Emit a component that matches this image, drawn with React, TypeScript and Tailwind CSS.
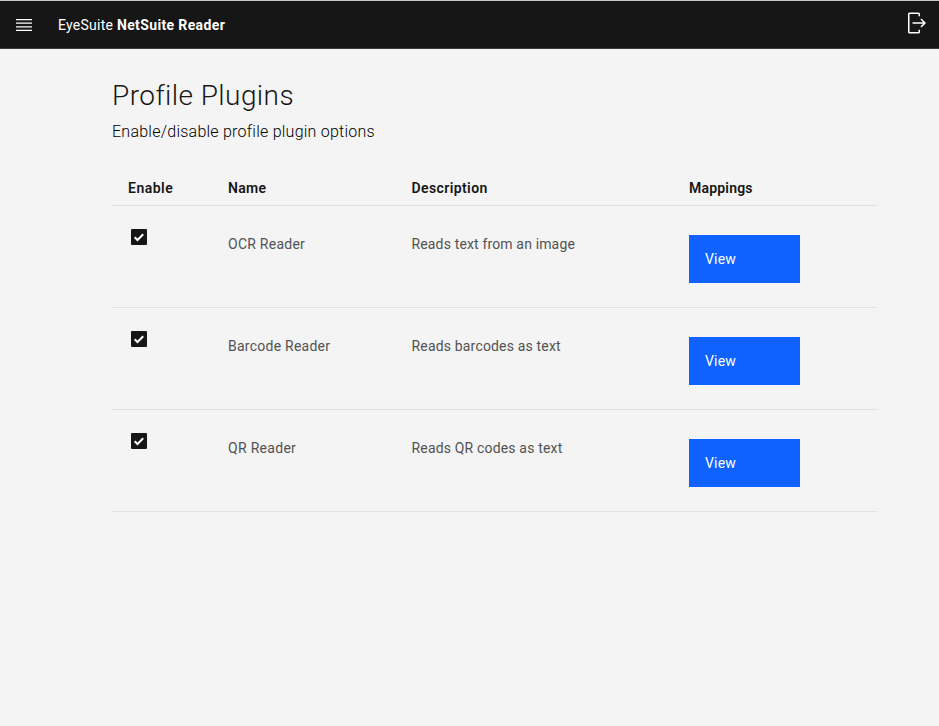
const plugins = [
  { name: 'OCR Reader', nameTrack: 'tracking-[0.25px]', description: 'Reads text from an image', descTrack: 'tracking-[0.15px]' },
  { name: 'Barcode Reader', nameTrack: 'tracking-[0.25px]', description: 'Reads barcodes as text', descTrack: 'tracking-[0.17px]' },
  { name: 'QR Reader', nameTrack: 'tracking-[0.3px]', description: 'Reads QR codes as text', descTrack: 'tracking-[0.17px]' },
];

const columns = 'grid grid-cols-[100px_183.5px_277.5px_1fr] pl-4';

function MenuIcon() {
  return (
    <svg width="20" height="20" viewBox="0 0 20 20" fill="#fff">
      <path d="M2 14.8H18V16H2zM2 11.2H18V12.4H2zM2 7.6H18V8.8H2zM2 4H18V5.2H2z" />
    </svg>
  );
}

function LogoutIcon() {
  return (
    <svg width="24" height="24" viewBox="0 0 32 32" fill="#fff">
      <path d="M6 30H18a2 2 0 0 0 2-2V25H18v3H6V4H18V7h2V4a2 2 0 0 0-2-2H6A2 2 0 0 0 4 4V28A2 2 0 0 0 6 30z" />
      <path d="M20.586 20.586 24.172 17 10 17 10 15 24.172 15 20.586 11.414 22 10 28 16 22 22z" />
    </svg>
  );
}

function Checkbox({ label }: { label: string }) {
  return (
    <button role="checkbox" aria-checked="true" aria-label={label} className="block size-4 rounded-[1px] bg-[#161616]">
      <svg width="16" height="16" viewBox="0 0 16 16" fill="none" stroke="#fff" strokeWidth="2">
        <path d="M3.7 8.2 6.5 11 12.2 5.3" />
      </svg>
    </button>
  );
}

export default function App() {
  return (
    <div className="flex h-[726px] w-[939px] flex-col bg-[#f4f4f4] font-['Roboto','Open_Sans',sans-serif] text-[#161616]">
      <header className="flex h-[49px] shrink-0 items-start border-t border-b border-t-[#c6c6c6] border-b-[#393939] bg-[#161616] text-white">
        <button aria-label="Menu" className="mt-3.5 ml-3.5"><MenuIcon /></button>
        <div className="mt-3.5 ml-6 text-sm leading-5 whitespace-nowrap">
          <span className="tracking-[0.25px]">EyeSuite </span>
          <span className="font-bold tracking-[0.37px]">NetSuite Reader</span>
        </div>
        <button aria-label="Log out" className="mt-2.5 mr-2.5 ml-auto"><LogoutIcon /></button>
      </header>
      <main className="ml-28 w-[765px]">
        <h1 className="mt-[29px] text-[28px] leading-9 font-light tracking-[0.43px]">Profile Plugins</h1>
        <p className="mt-[7px] text-base leading-[22px] font-light tracking-[0.24px] text-black">Enable/disable profile plugin options</p>
        <div className="mt-[30px]">
          <div className={`${columns} h-[33px] border-b border-[#e0e0e0] pt-1.5 text-sm leading-[18px] font-semibold`}>
            <span className="tracking-[0.5px]">Enable</span>
            <span className="tracking-[0.3px]">Name</span>
            <span className="tracking-[0.4px]">Description</span>
            <span className="tracking-[0.2px]">Mappings</span>
          </div>
          {plugins.map((p) => (
            <div key={p.name} className={`${columns} h-[102px] border-b border-[#e0e0e0] text-sm leading-[18px] text-[#525252]`}>
              <div className="pt-[23px] pl-[3px]"><Checkbox label={p.name} /></div>
              <div className="pt-[29px]"><span className={p.nameTrack}>{p.name}</span></div>
              <div className="pt-[29px]"><span className={p.descTrack}>{p.description}</span></div>
              <div className="pt-[29px]">
                <button className="flex h-12 w-[111px] items-center bg-[#0f62fe] pl-4 tracking-[0.2px] text-white">View</button>
              </div>
            </div>
          ))}
        </div>
      </main>
    </div>
  );
}
